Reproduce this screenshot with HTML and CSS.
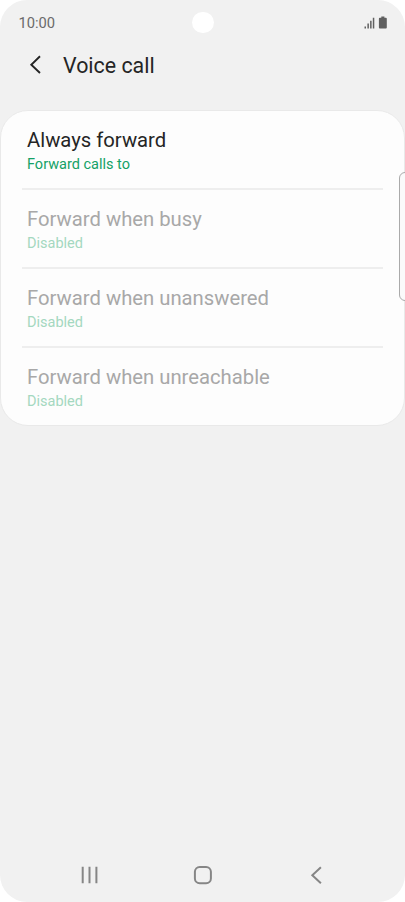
FILE: index.html
```html
<!DOCTYPE html>
<html lang="en">
<head>
<meta charset="utf-8">
<title>Voice call</title>
<link rel="stylesheet" href="styles.css">
</head>
<body>
<div class="screen">
  <div class="status">
    <span class="time">10:00</span>
    <span class="camera"></span>
    <svg class="indicators" width="24" height="14" viewBox="0 0 24 14">
      <path d="M.5 10.400h1.500v2H.5zM3.400 7.600h1.500v4.800H3.400zM6.100 4.700h1.500v7.700H6.100zM8.800 1.800h1.500v10.600H8.800z"/>
      <path d="M17.300.6h3.100v1.200h1.500q.9 0 .9.900v8.900q0 .9-.9.900h-6.100q-.9 0-.9-.9V2.700q0-.9.9-.9h1.500z"/>
    </svg>
  </div>
  <header class="header">
    <svg class="back" width="12" height="20" viewBox="0 0 12 20"><path d="M11 1.300L2.300 9.700l8.700 8.300"/></svg>
    <h1 class="title">Voice call</h1>
  </header>
  <main class="card">
    <div class="row active"><div class="name">Always forward</div><div class="state">Forward calls to</div></div>
    <div class="row"><div class="name">Forward when busy</div><div class="state">Disabled</div></div>
    <div class="row"><div class="name">Forward when unanswered</div><div class="state">Disabled</div></div>
    <div class="row"><div class="name">Forward when unreachable</div><div class="state">Disabled</div></div>
  </main>
  <div class="edge-handle"></div>
  <nav class="nav">
    <svg width="20" height="20" viewBox="0 0 20 20"><path d="M2.700 1.800v16.400M9.500 1.800v16.400M16.400 1.800v16.400"/></svg>
    <svg width="20" height="20" viewBox="0 0 20 20"><rect x="1.900" y="2" width="16" height="16.200" rx="4.800"/></svg>
    <svg width="20" height="20" viewBox="0 0 20 20"><path d="M14.900 2.200L6.300 10.300l8.600 8"/></svg>
  </nav>
</div>
</body>
</html>
```
FILE: styles.css
```css
* { box-sizing: border-box; }
body {
  margin: 0;
  background: #fff;
  font-family: Roboto, "Liberation Sans", sans-serif;
}
.screen {
  position: relative;
  display: flex;
  flex-direction: column;
  width: 405px;
  height: 902px;
  overflow: hidden;
  background: #f1f1f1;
  border-radius: 27px;
}
.status {
  display: grid;
  grid-template-columns: 1fr 21.400px 1fr;
  align-items: center;
  height: 45px;
  padding: 0 17px 0 18px;
}
.time {
  font-size: 14.700px;
  color: #6a6a6a;
  padding-left: .4px;
}
.camera {
  width: 21.400px;
  height: 21.400px;
  border-radius: 50%;
  background: #fff;
}
.indicators {
  justify-self: end;
  margin-top: 1px;
  fill: #606060;
}
.header {
  display: flex;
  align-items: center;
  height: 40px;
  padding-left: 29px;
}
.back {
  fill: none;
  stroke: #252525;
  stroke-width: 1.9;
}
.title {
  margin: 1px 0 0 22px;
  font-size: 21.400px;
  line-height: 28px;
  font-weight: 400;
  color: #252525;
}
.card {
  height: 316px;
  margin-top: 25px;
  border: 1px solid #e9e9e9;
  border-radius: 28px;
  background: #fdfdfd;
}
.row {
  height: 79px;
  margin: 0 21px;
  padding: 16px 0 0 5px;
  border-bottom: 2px solid #eee;
  color: #a8a8a8;
}
.row:last-child { border-bottom: 0; }
.name {
  font-size: 20.250px;
  line-height: 26px;
}
.state {
  margin-top: 2px;
  font-size: 14.500px;
  line-height: 20px;
  color: #a4d8c0;
}
.active .name { color: #252525; }
.active .state { color: #14a166; }
.edge-handle {
  position: absolute;
  left: 399px;
  top: 172px;
  width: 14px;
  height: 129px;
  border: 1px solid #aaa;
  border-radius: 6px;
  background: #fafafa;
}
.nav {
  display: flex;
  justify-content: space-between;
  margin-top: auto;
  height: 37px;
  padding: 0 79px 0 80px;
}
.nav svg {
  fill: none;
  stroke: #868686;
  stroke-width: 2;
}
```
